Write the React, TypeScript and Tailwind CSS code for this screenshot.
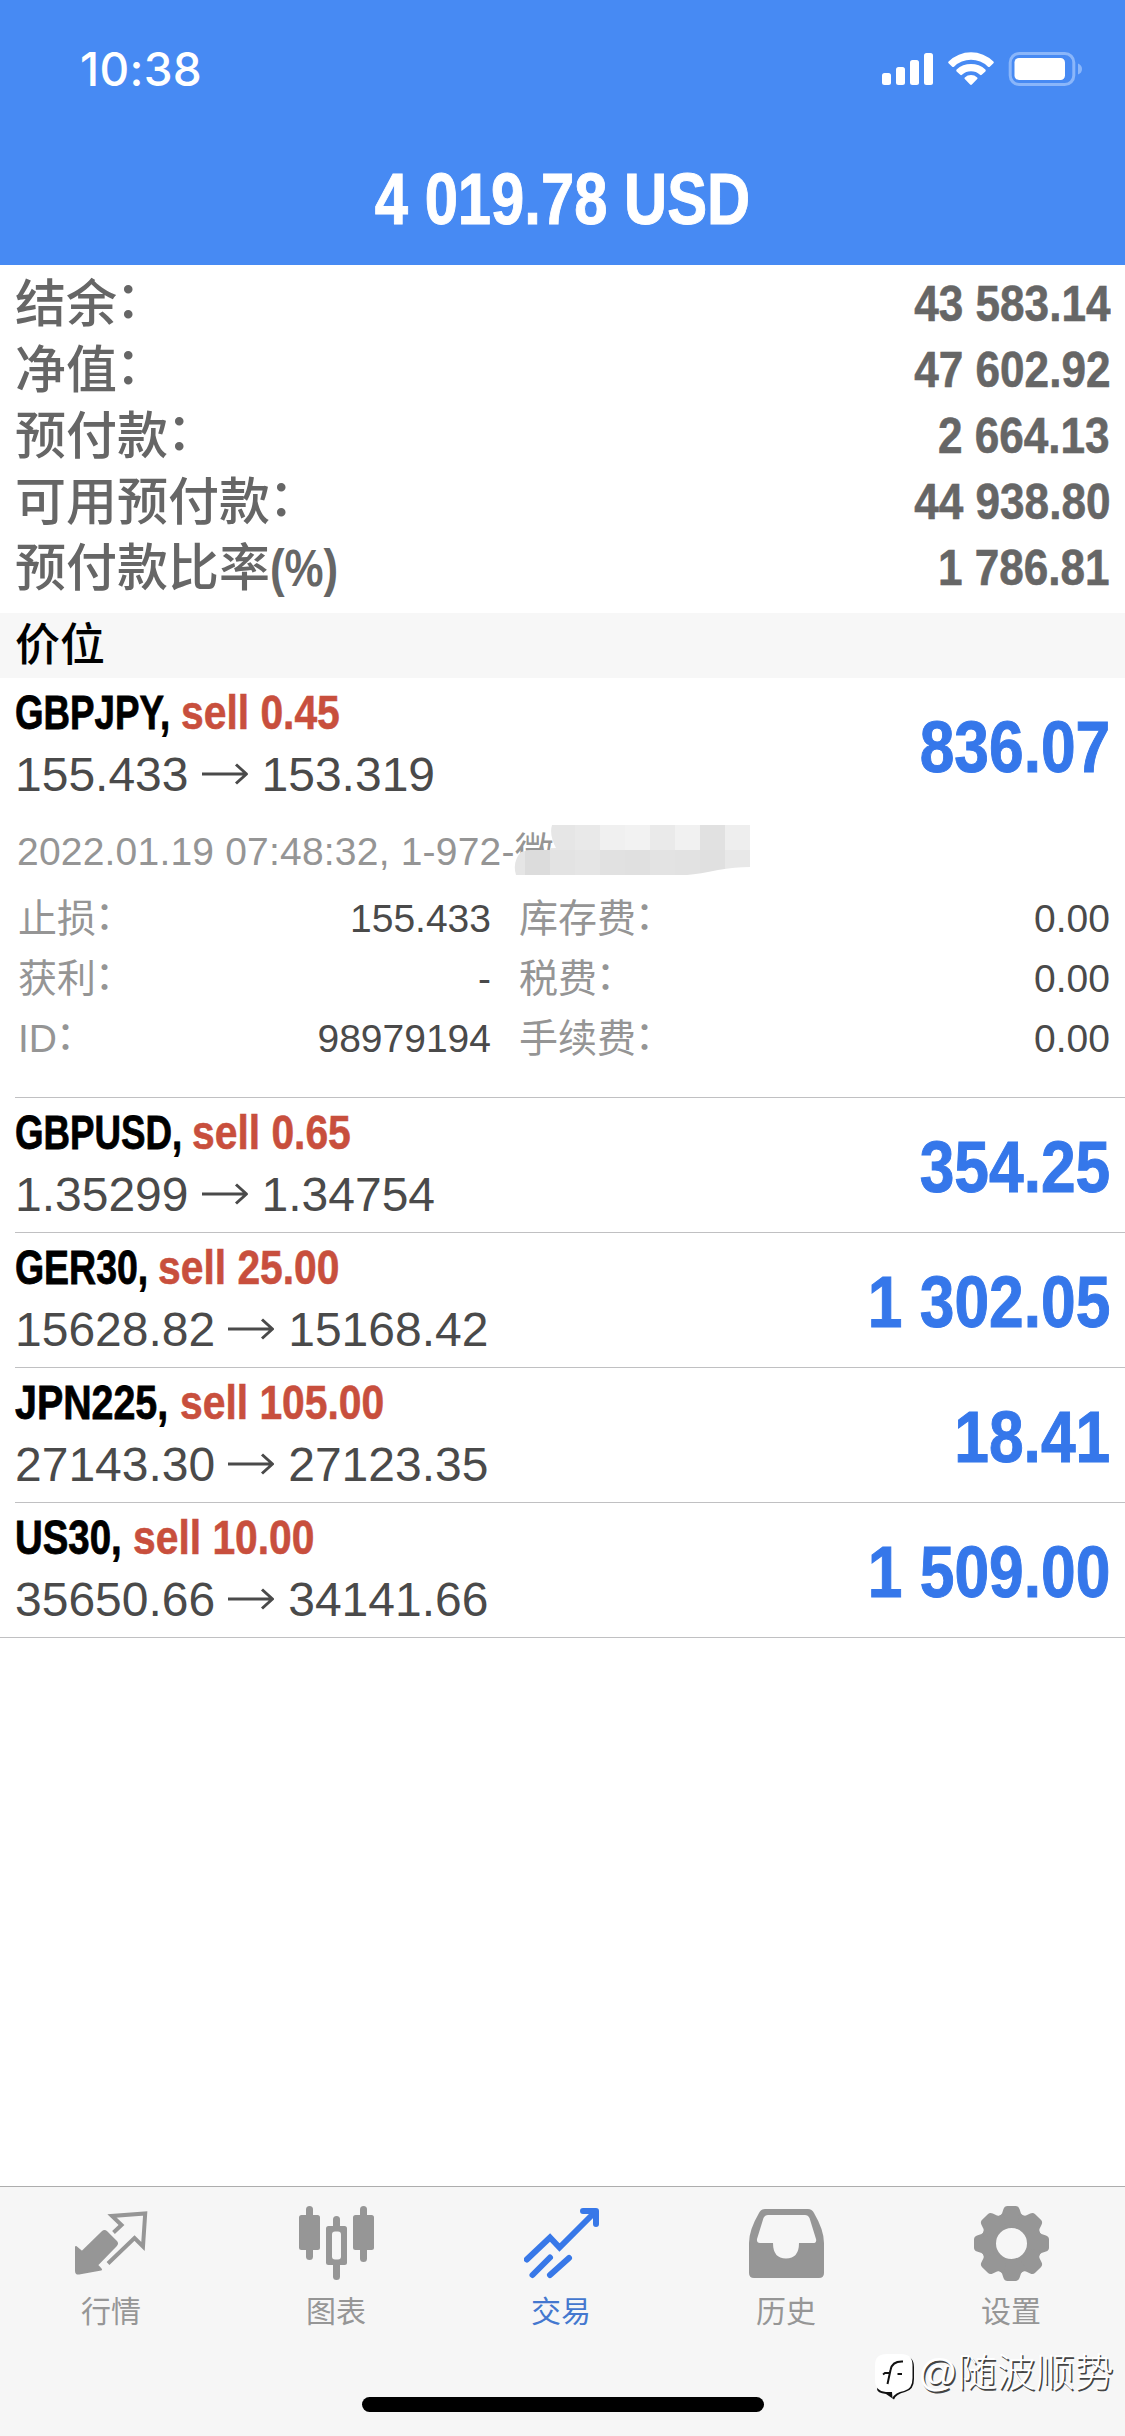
import type { ReactNode } from 'react';

interface Position {
  symbol: string;
  symbolClass: string;
  volume: string;
  open: string;
  current: string;
  profit: string;
}

const summary = [
  { label: '结余', colon: true, value: '43 583.14' },
  { label: '净值', colon: true, value: '47 602.92' },
  { label: '预付款', colon: true, value: '2 664.13' },
  { label: '可用预付款', colon: true, value: '44 938.80' },
  { label: '预付款比率', colon: false, value: '1 786.81' },
];

const positions: Position[] = [
  { symbol: 'GBPJPY,', symbolClass: 'w-[166px] scale-x-[.765]', volume: 'sell 0.45', open: '155.433', current: '153.319', profit: '836.07' },
  { symbol: 'GBPUSD,', symbolClass: 'w-[177px] scale-x-[.765]', volume: 'sell 0.65', open: '1.35299', current: '1.34754', profit: '354.25' },
  { symbol: 'GER30,', symbolClass: 'w-[143px] scale-x-[.78]', volume: 'sell 25.00', open: '15628.82', current: '15168.42', profit: '1 302.05' },
  { symbol: 'JPN225,', symbolClass: 'w-[165px] scale-x-[.82]', volume: 'sell 105.00', open: '27143.30', current: '27123.35', profit: '18.41' },
  { symbol: 'US30,', symbolClass: 'w-[118px] scale-x-[.8]', volume: 'sell 10.00', open: '35650.66', current: '34141.66', profit: '1 509.00' },
];

const details = [
  { label: '止损', value: '155.433', label2: '库存费', value2: '0.00' },
  { label: '获利', value: '-', label2: '税费', value2: '0.00' },
  { label: 'ID', value: '98979194', label2: '手续费', value2: '0.00' },
];

// Full-width colon, nudged to the middle of the line
function Colon() {
  return <span className="relative -top-[0.07em] -left-[0.03em]">：</span>;
}

function StatusIcons() {
  return (
    <svg width="204" height="38" viewBox="880 50 204 38" fill="white">
      <rect x="882" y="73" width="9" height="12" rx="2.5" />
      <rect x="896" y="67" width="9" height="18" rx="2.5" />
      <rect x="910" y="60" width="9" height="25" rx="2.5" />
      <rect x="924" y="53" width="9" height="32" rx="2.5" />
      <path d="M948.6 61.5a32 32 0 0 1 44.8 0q.8.9 0 1.8l-3.6 3.4q-.9.7-1.8 0a24.5 24.5 0 0 0-34 0q-.9.7-1.8 0l-3.6-3.4q-.8-.9 0-1.8z" />
      <path d="M956.6 69.6a21 21 0 0 1 28.8 0q.8.9 0 1.8l-3.7 3.4q-.8.7-1.7 0a13.5 13.5 0 0 0-18 0q-.9.7-1.7 0l-3.7-3.4q-.8-.9 0-1.8z" />
      <path d="M964.8 77.4a9.5 9.5 0 0 1 12.4 0q.8.8 0 1.6l-5.3 5.5q-.9.8-1.8 0l-5.3-5.5q-.8-.8 0-1.6z" />
      <rect x="1010.2" y="53.5" width="63.6" height="31" rx="9" fill="none" stroke="#8ab6fa" strokeWidth="3" />
      <rect x="1014.5" y="58" width="50.5" height="22" rx="4.5" />
      <path d="M1078 63.5q4 1.5 4 5.5t-4 5.5z" fill="#8ab6fa" />
    </svg>
  );
}

function Arrow() {
  return (
    <svg width="48" height="24" viewBox="0 0 48 24" fill="none" stroke="#4a4a4a" strokeWidth="3" className="mr-[13px] mb-[2px] ml-[12px]">
      <path d="M1 12H45M35 2.5L45.5 12L35 21.5" strokeLinejoin="round" />
    </svg>
  );
}

function PositionRow({ position }: { position: Position }) {
  return (
    <div className="flex h-[134px] justify-between pr-[15px]">
      <div className="pt-[8px]">
        <div className="flex text-[48px] leading-[54px] font-bold whitespace-pre">
          <span className={`origin-left text-black [-webkit-text-stroke:0.8px_#000] ${position.symbolClass}`}>{position.symbol}</span>
          <span className="origin-left scale-x-[.85] text-[#c84f3d] [-webkit-text-stroke:0.6px_#c84f3d]">{position.volume}</span>
        </div>
        <div className="mt-[8px] flex items-center text-[48px] leading-[54px] text-[#4a4a4a]">
          <span>{position.open}</span>
          <Arrow />
          <span>{position.current}</span>
        </div>
      </div>
      <div className="origin-right scale-x-[.865] pt-[29px] text-[72px] leading-[80px] font-bold text-[#3577ea] [-webkit-text-stroke:1px_#3577ea]">
        {position.profit}
      </div>
    </div>
  );
}

// Pixelated smudge hiding the end of the order comment
function Mosaic() {
  const top = ['#e6e6e6', '#e9e9e9', '#f0f0f0', '#f2f2f2', '#eaeaea', '#f1f1f1', '#e1e1e1', '#eeeeee'];
  const bottom = ['#e5e5e5', '#dcdcdc', '#e3e3e3', '#e5e5e5', '#e1e1e1', '#e0e0e0', '#e3e3e3', '#e2e2e2', '#e0e0e0', '#e8e8e8'];
  return (
    <svg width="240" height="56" viewBox="512 822 240 56" className="absolute top-[10px] left-[497px]">
      <clipPath id="smudge">
        <path d="M552 825H750V867Q735 867 718 870Q700 874 687 875H516Q512 862 521 852Q535 848 556 848Q549 835 552 825Z" />
      </clipPath>
      <g clipPath="url(#smudge)">
        {top.map((fill, i) => (
          <rect key={i} x={550 + i * 25} y="825" width="25" height="25" fill={fill} />
        ))}
        {bottom.map((fill, i) => (
          <rect key={i} x={500 + i * 25} y="850" width="25" height="25" fill={fill} />
        ))}
      </g>
    </svg>
  );
}

function PositionDetails() {
  return (
    <div className="h-[285px] text-[39px] leading-[60px] text-[#959595]">
      <div className="relative pt-[10px] pl-[2px] tracking-[0.2px] whitespace-nowrap">
        2022.01.19 07:48:32, 1-972-微
        <Mosaic />
      </div>
      <div className="mt-[7px] pl-[3px]">
        {details.map((row) => (
          <div key={row.label} className="flex h-[60px]">
            <span>{row.label}<Colon /></span>
            <span className="ml-auto text-[#4a4a4a]">{row.value}</span>
            <div className="ml-[28px] flex w-[606px] justify-between pr-[15px]">
              <span>{row.label2}<Colon /></span>
              <span className="text-[#4a4a4a]">{row.value2}</span>
            </div>
          </div>
        ))}
      </div>
    </div>
  );
}

function QuotesIcon() {
  return (
    <svg width="75" height="78" viewBox="74 2205 75 78">
      <path
        d="M76 2247L82 2252L102.5 2232Q104.5 2230 106.5 2232L116 2241.5Q118 2243.5 116 2245.5L97 2265L101 2269.5L79 2273.5Q76 2274 76 2271Z"
        fill="#969696"
        stroke="#969696"
        strokeWidth="2"
        strokeLinejoin="round"
      />
      <path d="M113.5 2232.5L121.5 2225L112 2216L145.2 2213.5L143 2246.5L134.5 2238L108 2263.5" fill="none" stroke="#969696" strokeWidth="4" strokeLinejoin="miter" />
    </svg>
  );
}

function ChartIcon() {
  return (
    <svg width="75" height="78" viewBox="299 2205 75 78" fill="#969696">
      <rect x="299" y="2215" width="21" height="35" rx="2.5" />
      <rect x="306" y="2206" width="7" height="54" rx="3.5" />
      <rect x="353" y="2215" width="21" height="35" rx="2.5" />
      <rect x="360" y="2206" width="7" height="56" rx="3.5" />
      <rect x="333" y="2216" width="7" height="64" rx="3.5" />
      <rect x="326" y="2226" width="21" height="39" rx="2.5" />
      <rect x="332" y="2231.5" width="9" height="28" rx="3" fill="#f6f6f6" />
    </svg>
  );
}

function TradeIcon() {
  return (
    <svg width="75" height="78" viewBox="524 2205 75 78" fill="none" stroke="#3878e8" strokeWidth="6" strokeLinecap="round">
      <path d="M526.8 2259.5L550 2237.5L559.5 2247.5L594 2213" strokeLinejoin="miter" />
      <path d="M583 2211H596V2224" strokeLinejoin="round" />
      <path d="M589 2211L596 2211L596 2219Z" fill="#3878e8" strokeWidth="1" />
      <path d="M532.5 2275L550 2257.5M550 2275L569 2258" />
    </svg>
  );
}

function HistoryIcon() {
  return (
    <svg width="75" height="78" viewBox="749 2205 75 78">
      <path
        fillRule="evenodd"
        fill="#969696"
        d="M765 2209H808Q812 2209 814 2213Q824 2230 824 2243V2273Q824 2278 819 2278H754Q749 2278 749 2273V2243Q749 2230 759 2213Q761 2209 765 2209ZM768 2215Q765 2215 763.5 2218L757 2239Q756.5 2243 760 2243H773Q773 2258.5 786 2258.5T799 2243H813Q817 2243 816 2239L809.5 2218Q808 2215 805 2215Z"
      />
    </svg>
  );
}

function SettingsIcon() {
  return (
    <svg width="75" height="78" viewBox="-37.5 -38.5 75 78" fill="#969696">
      <circle r="23" fill="none" stroke="#969696" strokeWidth="15" />
      {[0, 45, 90, 135, 180, 225, 270, 315].map((angle) => (
        <path
          key={angle}
          transform={`rotate(${angle})`}
          d="M-15 -26Q-11 -27 -9.5 -30L-8 -34.5Q-7 -37.5 -4 -37.5H4Q7 -37.5 8 -34.5L9.5 -30Q11 -27 15 -26L10 -18H-10Z"
        />
      ))}
    </svg>
  );
}

function Tab({ label, active, children }: { label: string; active?: boolean; children: ReactNode }) {
  return (
    <div className="flex flex-1 flex-col items-center pt-[18px] pr-[3px]">
      {children}
      <span className={`mt-[10px] text-[30px] leading-[38px] ${active ? 'text-[#4478cf]' : 'text-[#969696]'}`}>{label}</span>
    </div>
  );
}

function Watermark() {
  return (
    <div className="absolute top-[2345px] left-[874px] flex items-start text-white">
      <svg width="42" height="56" viewBox="0 0 42 56">
        <path d="M16 11H29Q40 11 40 22V34Q40 45 31 47Q22 49 20 54.5L12 49Q3 48 3 44Z" fill="#111" />
        <path d="M13 9H27Q38.5 9 38.5 20V33Q38.5 44 30 46Q21 47.500 18.500 53L18 47H12Q1 46 1 35V20Q1 9 13 9Z" fill="white" />
        <path d="M29 16.5Q18 16 16.5 25L13.5 39M9 29.5L11 28H16M23.5 29H28" fill="none" stroke="#111" strokeWidth="2" />
      </svg>
      <span className="mt-px ml-[2px] text-[39px] leading-[54px] font-light [text-shadow:1.5px_1.5px_0.5px_#444]">@随波顺势</span>
    </div>
  );
}

export default function App() {
  return (
    <div className="relative flex h-[2436px] w-[1125px] flex-col overflow-hidden bg-white font-['Liberation_Sans','Noto_Sans_CJK_SC',sans-serif]">
      <header className="h-[265px] bg-[#478af3] text-white">
        <div className="flex h-[138px] items-center justify-between pr-[41px] pl-[80px]">
          <span className="font-['Inter',sans-serif] text-[46px] font-medium tracking-[0.3px]">10:38</span>
          <StatusIcons />
        </div>
        <h1 className="scale-x-[.83] text-center text-[72px] leading-[122px] font-bold [-webkit-text-stroke:1px_#fff]">4 019.78 USD</h1>
      </header>

      <section className="h-[348px] pt-[6px] pr-[15px] pl-[15px] text-[#666]">
        {summary.map((row) => (
          <div key={row.label} className="flex h-[66px] justify-between text-[50px] leading-[66px]">
            <span className="pt-px text-[51px] font-medium">
              {row.label}
              {row.colon ? <Colon /> : <span className="inline-block origin-left scale-x-[.86] font-bold">(%)</span>}
            </span>
            <span className="origin-right scale-x-[.882] font-bold [-webkit-text-stroke:0.6px_#666]">{row.value}</span>
          </div>
        ))}
      </section>

      <div className="h-[65px] bg-[#f7f7f7] pl-[15px] text-[45px] leading-[66px] font-medium text-black">价位</div>

      <main className="flex-1">
        <div className="pl-[15px]">
          <PositionRow position={positions[0]} />
          <PositionDetails />
        </div>
        <div className="border-b border-[#c0c0c2]">
          {positions.slice(1).map((position) => (
            <div key={position.symbol} className="ml-[15px] border-t border-[#c0c0c2]">
              <PositionRow position={position} />
            </div>
          ))}
        </div>
      </main>

      <nav className="flex h-[250px] border-t border-[#adadad] bg-[#f6f6f6]">
        <Tab label="行情"><QuotesIcon /></Tab>
        <Tab label="图表"><ChartIcon /></Tab>
        <Tab label="交易" active><TradeIcon /></Tab>
        <Tab label="历史"><HistoryIcon /></Tab>
        <Tab label="设置"><SettingsIcon /></Tab>
      </nav>
      <div className="absolute top-[2397px] left-[362px] h-[15px] w-[402px] rounded-full bg-black" />
      <Watermark />
    </div>
  );
}
